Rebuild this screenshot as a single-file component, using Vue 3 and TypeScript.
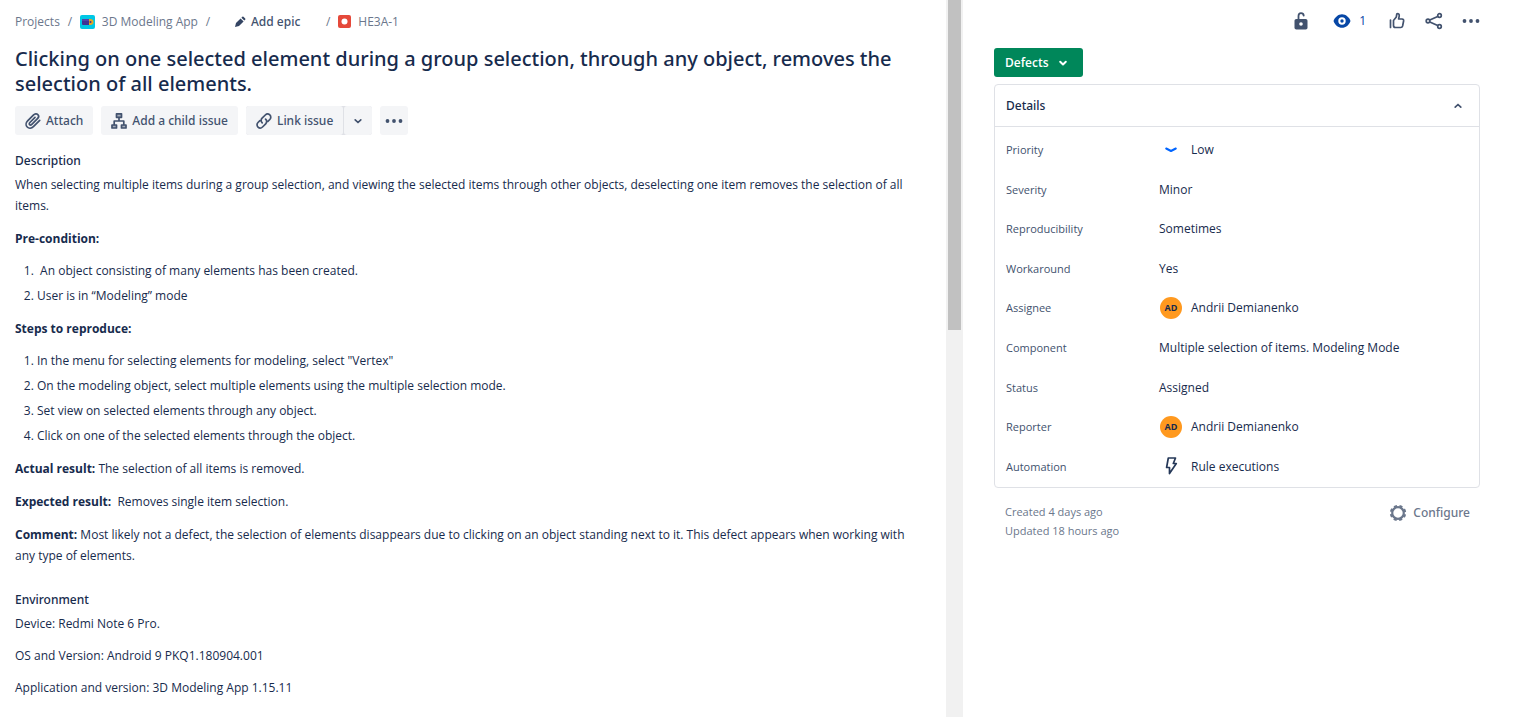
<script setup lang="ts">
import { ref } from 'vue'

interface Field {
  label: string
  value: string
  icon?: 'low' | 'avatar' | 'bolt'
}

const fields: Field[] = [
  { label: 'Priority', value: 'Low', icon: 'low' },
  { label: 'Severity', value: 'Minor' },
  { label: 'Reproducibility', value: 'Sometimes' },
  { label: 'Workaround', value: 'Yes' },
  { label: 'Assignee', value: 'Andrii Demianenko', icon: 'avatar' },
  { label: 'Component', value: 'Multiple selection of items. Modeling Mode' },
  { label: 'Status', value: 'Assigned' },
  { label: 'Reporter', value: 'Andrii Demianenko', icon: 'avatar' },
  { label: 'Automation', value: 'Rule executions', icon: 'bolt' },
]

const preconditions: string[] = [
  '\u00a0An object consisting of many elements has been created.',
  'User is in “Modeling” mode',
]

const steps: string[] = [
  'In the menu for selecting elements for modeling, select "Vertex"',
  'On the modeling object, select multiple elements using the multiple selection mode.',
  'Set view on selected elements through any object.',
  'Click on one of the selected elements through the object.',
]

const environment: string[] = [
  'Device: Redmi Note 6 Pro.',
  'OS and Version: Android 9 PKQ1.180904.001',
  'Application and version: 3D Modeling App 1.15.11',
]

const detailsOpen = ref(true)
</script>

<template>
  <div class="page">
    <main class="issue">
      <nav class="crumbs" aria-label="Breadcrumbs">
        <a href="#">Projects</a>
        <span class="slash">/</span>
        <a href="#" class="with-icon">
          <svg width="15" height="16" viewBox="0 0 15 16" aria-hidden="true">
            <rect y="1" width="15" height="14" rx="2" fill="#00c7e5" />
            <path d="M2 5h7.500v6H3q-1 0-1-1z" fill="#403294" />
            <path d="M2 5h7.500v2H2z" fill="#5243aa" />
            <path d="M9 5h1.500q3 .3 3 3t-3 3H9z" fill="#e5a823" />
            <circle cx="10.500" cy="8" r="1" fill="#403294" />
          </svg>
          3D Modeling App
        </a>
        <span class="slash">/</span>
        <button type="button" class="epic">
          <svg width="12" height="12" viewBox="0 0 12 12" aria-hidden="true">
            <path d="M1 11l1-4 4.600-4.600 3 3L5 10z M7.400 1.700l.9-.9q.6-.5 1.200 0l1.700 1.700q.5.600 0 1.200l-.9.9z" fill="#344563" />
          </svg>
          Add epic
        </button>
        <span class="slash">/</span>
        <a href="#" class="with-icon">
          <svg width="13" height="13" viewBox="0 0 13 13" aria-hidden="true">
            <rect width="13" height="13" rx="2" fill="#e5493a" />
            <circle cx="6.500" cy="6.500" r="3" fill="#fff" />
          </svg>
          HE3A-1
        </a>
      </nav>

      <h1>Clicking on one selected element during a group selection, through any object, removes the selection of all elements.</h1>

      <div class="toolbar">
        <button type="button" class="tool">
          <svg width="18" height="18" viewBox="0 0 18 18" class="line" aria-hidden="true">
            <path d="M15.700 8.300l-6.300 6.300c-1.800 1.800-4.600 2-6.200.4s-1.400-4.400.4-6.200l6-6c1.200-1.200 3.100-1.400 4.200-.3s.9 3-.3 4.200l-5.700 5.700c-.7.7-1.700.8-2.200.3s-.4-1.500.3-2.200L11 5.400" />
          </svg>
          Attach
        </button>
        <button type="button" class="tool">
          <svg width="18" height="18" viewBox="0 0 18 18" class="line" aria-hidden="true">
            <path d="M6.500 1.800h5v3.500h-5zM2 13h4.500v3H2zM11.500 13H16v3h-4.500z" fill="#a5adba" />
            <path d="M9 5.500V9M4.200 12.500V9h9.600v3.500" />
          </svg>
          Add a child issue
        </button>
        <div class="split">
          <button type="button" class="tool">
            <svg width="18" height="18" viewBox="0 0 18 18" class="line" aria-hidden="true">
              <path d="M7.200 10.800c-1.400-1.400-1.400-3.300-.1-4.600l3.200-3.200c1.300-1.300 3.200-1.300 4.500-.1s1.300 3.300 0 4.600l-1.900 1.900M10.600 7.200c1.400 1.400 1.400 3.300.1 4.600L7.500 15c-1.300 1.300-3.200 1.300-4.500.1s-1.300-3.300 0-4.600l1.900-1.900" />
            </svg>
            Link issue
          </button>
          <button type="button" class="square" aria-label="More link options">
            <svg width="10" height="10" viewBox="0 0 10 10" class="line" aria-hidden="true"><path d="M2.200 3.800L5 6.500l2.800-2.700" /></svg>
          </button>
        </div>
        <button type="button" class="square" aria-label="More actions">
          <svg width="18" height="6" viewBox="0 0 18 6" fill="#42526e" aria-hidden="true">
            <circle cx="2.500" cy="3" r="1.900" /><circle cx="9" cy="3" r="1.900" /><circle cx="15.500" cy="3" r="1.900" />
          </svg>
        </button>
      </div>

      <section class="block">
        <h2>Description</h2>
        <p class="first">When selecting multiple items during a group selection, and viewing the selected items through other objects, deselecting one item removes the selection of all items.</p>
        <p><strong>Pre-condition:</strong></p>
        <ol>
          <li v-for="item in preconditions" :key="item">{{ item }}</li>
        </ol>
        <p><strong>Steps to reproduce:</strong></p>
        <ol>
          <li v-for="item in steps" :key="item">{{ item }}</li>
        </ol>
        <p><strong>Actual result:</strong> The selection of all items is removed.</p>
        <p><strong>Expected result:</strong>&nbsp; Removes single item selection.</p>
        <p><strong>Comment:</strong> Most likely not a defect, the selection of elements disappears due to clicking on an object standing next to it. This defect appears when working with any type of elements.</p>
      </section>

      <section class="block environment">
        <h2>Environment</h2>
        <p v-for="line in environment" :key="line">{{ line }}</p>
      </section>
    </main>

    <div class="scrollbar" aria-hidden="true"><div class="thumb"></div></div>

    <aside class="side">
      <div class="actions">
        <button type="button" class="icon" aria-label="Restrictions">
          <svg width="14" height="18" viewBox="0 0 14 18" aria-hidden="true">
            <rect x=".5" y="7" width="13" height="10.500" rx="1.800" fill="#42526e" />
            <path d="M4.500 8V4q0-2.800 2.500-2.800T9.700 3.600" fill="none" stroke="#42526e" stroke-width="1.800" stroke-linecap="round" />
            <circle cx="7" cy="12" r="1.800" fill="#fff" />
          </svg>
        </button>
        <button type="button" class="icon watch" aria-label="Watchers: 1">
          <svg width="18" height="16" viewBox="0 0 18 16" aria-hidden="true">
            <path d="M.5 8C2 4 5.200 1.200 9 1.200S16 4 17.500 8C16 12 12.800 14.800 9 14.800S2 12 .5 8z" fill="#0747a6" />
            <circle cx="9" cy="8" r="2.700" fill="none" stroke="#fff" stroke-width="2" />
          </svg>
          <span>1</span>
        </button>
        <button type="button" class="icon" aria-label="Vote">
          <svg width="18" height="18" viewBox="0 0 18 18" class="line" aria-hidden="true">
            <path d="M2.500 8v7.500M5.500 8.500L8.300 5l.5-3q1-.8 2 .1.600.8.400 2L10.600 7H14q1.900.3 1.600 2l-1 5q-.4 1.500-1.800 1.500H7.500q-2 0-2-2z" />
          </svg>
        </button>
        <button type="button" class="icon" aria-label="Share">
          <svg width="18" height="18" viewBox="0 0 18 18" class="line" aria-hidden="true">
            <circle cx="3" cy="9" r="1.800" /><circle cx="14.500" cy="3.500" r="1.800" /><circle cx="14.500" cy="14.500" r="1.800" />
            <path d="M4.800 8.100l7.900-3.700M4.800 9.900l7.900 3.700" />
          </svg>
        </button>
        <button type="button" class="icon" aria-label="Actions">
          <svg width="18" height="6" viewBox="0 0 18 6" fill="#42526e" aria-hidden="true">
            <circle cx="2.500" cy="3" r="1.900" /><circle cx="9" cy="3" r="1.900" /><circle cx="15.500" cy="3" r="1.900" />
          </svg>
        </button>
      </div>

      <button type="button" class="status">
        Defects
        <svg width="10" height="10" viewBox="0 0 10 10" aria-hidden="true"><path d="M2.200 3.800L5 6.500l2.800-2.700" /></svg>
      </button>

      <section class="card">
        <h2>
          <button type="button" class="toggle" :aria-expanded="detailsOpen" @click="detailsOpen = !detailsOpen">
            Details
            <svg width="10" height="10" viewBox="0 0 10 10" class="line" aria-hidden="true">
              <path :d="detailsOpen ? 'M2.200 6.200L5 3.500l2.800 2.700' : 'M2.200 3.800L5 6.500l2.800-2.700'" />
            </svg>
          </button>
        </h2>
        <dl v-if="detailsOpen">
          <div v-for="field in fields" :key="field.label" class="row">
            <dt>{{ field.label }}</dt>
            <dd>
              <span v-if="field.icon" class="mark">
                <span v-if="field.icon === 'avatar'" class="avatar">AD</span>
                <svg v-else-if="field.icon === 'low'" width="14" height="14" viewBox="0 0 14 14" aria-hidden="true">
                  <path d="M2.200 5.500L7 8l4.800-2.500" fill="none" stroke="#0065ff" stroke-width="2" stroke-linecap="round" stroke-linejoin="round" />
                </svg>
                <svg v-else width="14" height="20" viewBox="0 0 14 20" aria-hidden="true">
                  <path d="M4.300 2h7.200L9.300 7.500h3L5.500 17.500V11.500H2.600z" fill="none" stroke="#253858" stroke-width="1.700" stroke-linejoin="round" />
                </svg>
              </span>
              {{ field.value }}
            </dd>
          </div>
        </dl>
      </section>

      <footer class="meta">
        <div>
          <p>Created 4 days ago</p>
          <p>Updated 18 hours ago</p>
        </div>
        <button type="button" class="configure">
          <svg width="18" height="18" viewBox="0 0 18 18" aria-hidden="true">
            <circle cx="9" cy="9" r="5.800" fill="none" stroke="#6b778c" stroke-width="2.200" />
            <circle cx="9" cy="9" r="7" fill="none" stroke="#6b778c" stroke-width="2.400" stroke-dasharray="3 2.498" stroke-dashoffset="-1.250" />
          </svg>
          Configure
        </button>
      </footer>
    </aside>
  </div>
</template>

<style>
body {
  margin: 0;
  background: #fff;
}
</style>

<style scoped>
.page {
  display: grid;
  grid-template-columns: minmax(0, 946fr) 17px minmax(0, 555fr);
  min-height: 100vh;
  color: #172b4d;
  font-family: "Open Sans", "Noto Sans", sans-serif;
  font-size: 12px;
  line-height: 21px;
}
h1,
h2,
p,
ol,
dl,
dd {
  margin: 0;
}
button {
  border: 0;
  padding: 0;
  background: none;
  color: inherit;
  font: inherit;
  cursor: pointer;
}
svg {
  flex: none;
}
.line {
  fill: none;
  stroke: #42526e;
  stroke-width: 1.700px;
  stroke-linecap: round;
  stroke-linejoin: round;
}
.issue {
  padding: 11px 36px 16px 15px;
}
.crumbs {
  display: flex;
  align-items: center;
  color: #6b778c;
}
.crumbs a {
  color: inherit;
  text-decoration: none;
}
.with-icon {
  display: flex;
  align-items: center;
  gap: 7px;
}
.slash {
  width: 20px;
  text-align: center;
}
.epic {
  display: flex;
  align-items: center;
  gap: 5px;
  margin: 0 18px 0 16px;
  color: #42526e;
}
h1,
h2,
.epic,
.tool,
.configure {
  font-family: "Noto Sans", "Open Sans", sans-serif;
  font-weight: 500;
}
h1 {
  margin-top: 14px;
  font-size: 20px;
  line-height: 25px;
}
.toolbar {
  display: flex;
  gap: 8px;
  margin-top: 10px;
}
.tool,
.square {
  display: flex;
  align-items: center;
  justify-content: center;
  gap: 4px;
  height: 29px;
  padding: 0 10px 0 9px;
  border-radius: 3px;
  background: #f4f5f7;
  color: #42526e;
}
.square {
  width: 28px;
  padding: 0;
}
.split {
  display: flex;
  gap: 1px;
  border-radius: 3px;
  background: #dfe1e6;
}
h2 {
  font-size: 12px;
}
.block {
  margin-top: 15px;
}
.block p {
  margin-top: 12px;
}
.block .first {
  margin-top: 3px;
}
.block ol {
  display: grid;
  gap: 4px;
  margin-top: 11px;
  padding-left: 22px;
}
.environment {
  margin-top: 23px;
}
.environment p {
  margin-top: 11px;
}
.environment h2 + p {
  margin-top: 3px;
}
.scrollbar {
  padding: 0 2px;
  background: #f1f1f1;
}
.thumb {
  height: 46%;
  background: #c1c1c1;
}
.side {
  padding: 6px 38px 16px 31px;
}
.actions {
  display: flex;
  justify-content: flex-end;
  gap: 8px;
  margin-right: -5px;
}
.icon {
  display: flex;
  align-items: center;
  justify-content: center;
  min-width: 29px;
  height: 29px;
}
.watch {
  gap: 8px;
  padding: 0 8px 0 10px;
  color: #0747a6;
}
.status {
  display: flex;
  align-items: center;
  gap: 9px;
  height: 29px;
  margin-top: 13px;
  padding: 0 15px 0 11px;
  border-radius: 3px;
  background: #00875a;
  color: #fff;
  font-weight: 600;
}
.status path {
  fill: none;
  stroke: #fff;
  stroke-width: 2px;
  stroke-linecap: round;
  stroke-linejoin: round;
}
.card {
  margin-top: 7px;
  border: 1px solid #dfe1e6;
  border-radius: 4px;
}
.toggle {
  display: flex;
  align-items: center;
  justify-content: space-between;
  width: 100%;
  height: 41px;
  padding: 0 16px 0 11px;
}
.card dl {
  display: grid;
  grid-auto-rows: 1fr;
  min-height: 356px;
  padding: 3px 11px 1px;
  border-top: 1px solid #dfe1e6;
}
.row {
  display: grid;
  grid-template-columns: 153px minmax(0, 1fr);
  align-items: center;
}
dt {
  color: #42526e;
  font-size: 11px;
}
dd {
  display: flex;
  align-items: center;
}
.mark {
  display: flex;
  justify-content: center;
  width: 24px;
  margin-right: 8px;
}
.avatar {
  width: 22px;
  height: 22px;
  border-radius: 50%;
  background: #ff991f;
  font-size: 9px;
  font-weight: 700;
  line-height: 22px;
  text-align: center;
}
.meta {
  display: flex;
  align-items: flex-start;
  justify-content: space-between;
  padding: 14px 10px 0 11px;
  color: #6b778c;
  font-size: 11px;
  line-height: 19px;
}
.configure {
  display: flex;
  align-items: center;
  gap: 6px;
  font-size: 12px;
  line-height: 21px;
}
</style>
